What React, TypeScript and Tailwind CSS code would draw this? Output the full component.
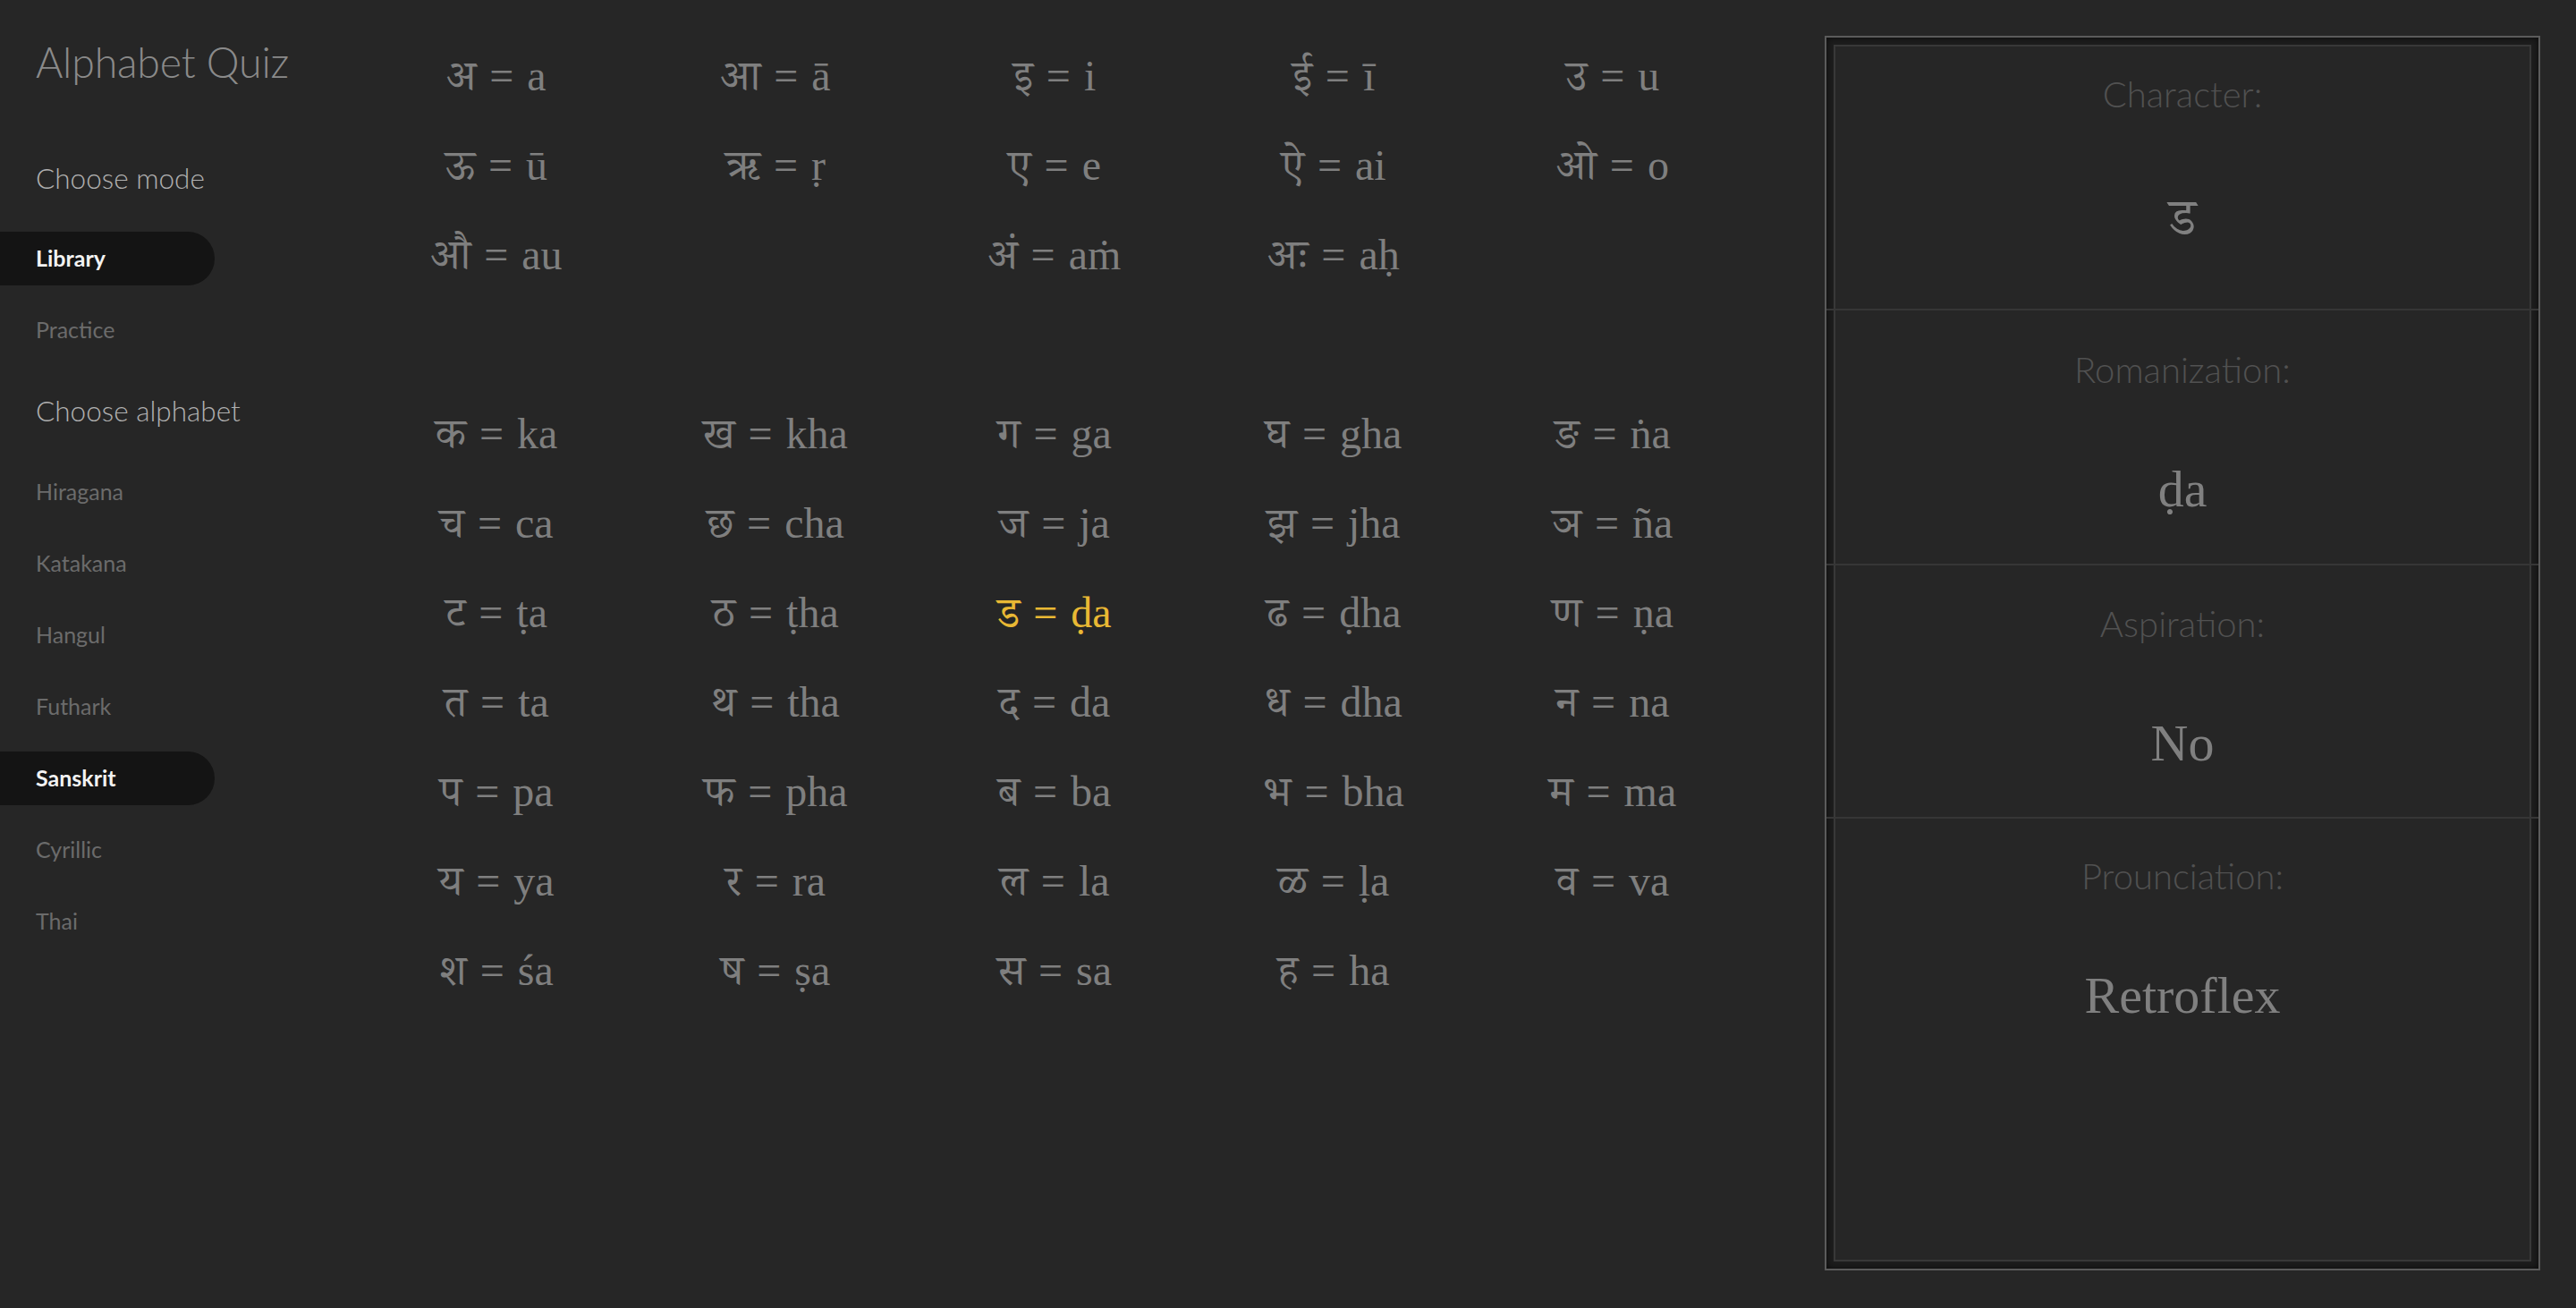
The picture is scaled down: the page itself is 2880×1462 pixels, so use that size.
import React from "react";

type Entry = [string, string] | null;

const vowels: Entry[] = [
  ["अ", "a"], ["आ", "ā"], ["इ", "i"], ["ई", "ī"], ["उ", "u"],
  ["ऊ", "ū"], ["ऋ", "ṛ"], ["ए", "e"], ["ऐ", "ai"], ["ओ", "o"],
  ["औ", "au"], null, ["अं", "aṁ"], ["अः", "aḥ"],
];

const consonants: Entry[] = [
  ["क", "ka"], ["ख", "kha"], ["ग", "ga"], ["घ", "gha"], ["ङ", "ṅa"],
  ["च", "ca"], ["छ", "cha"], ["ज", "ja"], ["झ", "jha"], ["ञ", "ña"],
  ["ट", "ṭa"], ["ठ", "ṭha"], ["ड", "ḍa"], ["ढ", "ḍha"], ["ण", "ṇa"],
  ["त", "ta"], ["थ", "tha"], ["द", "da"], ["ध", "dha"], ["न", "na"],
  ["प", "pa"], ["फ", "pha"], ["ब", "ba"], ["भ", "bha"], ["म", "ma"],
  ["य", "ya"], ["र", "ra"], ["ल", "la"], ["ळ", "ḷa"], ["व", "va"],
  ["श", "śa"], ["ष", "ṣa"], ["स", "sa"], ["ह", "ha"],
];

function Grid({ items }: { items: Entry[] }) {
  return (
    <div className="grid grid-cols-[repeat(5,312px)]">
      {items.map((e, i) =>
        e ? (
          <div
            key={i}
            className={
              "h-[100px] leading-[100px] text-center whitespace-nowrap text-[48px] " +
              (e[1] === "ḍa" ? "text-[#e9b834]" : "text-[#7f7f7f]")
            }
          >
            {e[0]}
            <span className="px-[3px]"> = </span>
            {e[1]}
          </div>
        ) : (
          <div key={i} className="h-[100px]" />
        )
      )}
    </div>
  );
}

function NavItem({ label, active }: { label: string; active?: boolean }) {
  return (
    <div
      className={
        "h-[60px] w-[240px] pl-10 leading-[58px] text-[25px] rounded-r-full " +
        (active ? "bg-[#141414] text-[#f2f2f2] font-bold" : "text-[#6b6b6b] font-normal")
      }
    >
      {label}
    </div>
  );
}

function Section({
  label,
  value,
  kind,
}: {
  label: string;
  value: string;
  kind: "first" | "mid" | "mid2" | "last";
}) {
  const box =
    kind === "first"
      ? "h-[293px] pt-[29px]"
      : kind === "mid"
      ? "h-[283px] pt-[42px]"
      : kind === "mid2"
      ? "h-[281px] pt-[41px]"
      : "flex-1 pt-[40px]";
  return (
    <div className={"flex flex-col items-center " + box}>
      <div className="h-[48px] leading-[48px] text-[40px] font-light text-[#515151] font-['Lato',sans-serif]">
        {label}
      </div>
      <div
        className={
          "leading-[66px] text-[58px] text-[#808080] font-['Liberation_Serif','Noto_Serif_Devanagari','Noto_Sans_Devanagari',serif] " +
          (kind === "first" ? "mt-[81px]" : "mt-[77px]")
        }
      >
        {value}
      </div>
    </div>
  );
}

function Divider() {
  return <div className="h-[2px] -mx-[10px] bg-[#363636]" />;
}

export default function App() {
  return (
    <div className="flex w-full h-[1462px] bg-[#262626] overflow-hidden font-['Lato',sans-serif]">
      {/* Sidebar */}
      <div className="w-[240px] shrink-0 flex flex-col pt-[40px]">
        <div className="pl-10 h-[58px] leading-[58px] text-[46.5px] font-light text-[#8a8a8a] whitespace-nowrap tracking-[-0.2px]">
          Alphabet Quiz
        </div>
        <div className="pl-10 mt-[81px] h-[40px] leading-[40px] text-[31.5px] font-light text-[#b0b0b0] whitespace-nowrap">
          Choose mode
        </div>
        <div className="mt-[40px] flex flex-col gap-[20px]">
          <NavItem label="Library" active />
          <NavItem label="Practice" />
        </div>
        <div className="pl-10 mt-[40px] h-[40px] leading-[40px] text-[31.5px] font-light text-[#b0b0b0] whitespace-nowrap">
          Choose alphabet
        </div>
        <div className="mt-[41px] flex flex-col gap-[20px]">
          <NavItem label="Hiragana" />
          <NavItem label="Katakana" />
          <NavItem label="Hangul" />
          <NavItem label="Futhark" />
          <NavItem label="Sanskrit" active />
          <NavItem label="Cyrillic" />
          <NavItem label="Thai" />
        </div>
      </div>

      {/* Main grid */}
      <div className="flex-1 pl-[159px] pt-[35px] font-['Liberation_Serif','Noto_Serif_Devanagari','Noto_Sans_Devanagari','Lohit_Devanagari',serif]">
        <Grid items={vowels} />
        <div className="h-[100px]" />
        <Grid items={consonants} />
      </div>

      {/* Detail panel */}
      <div className="w-[800px] shrink-0 mt-[40px] mr-[40px] mb-[42px] border-2 border-[#5b5b5b] bg-[#1e1e1e] p-[8px] shadow-[inset_0_0_8px_rgba(0,0,0,0.7)]">
        <div className="h-full flex flex-col border-2 border-[#383838] bg-[#262626]">
          <Section label="Character:" value="ड" kind="first" />
          <Divider />
          <Section label="Romanization:" value="ḍa" kind="mid" />
          <Divider />
          <Section label="Aspiration:" value="No" kind="mid2" />
          <Divider />
          <Section label="Prounciation:" value="Retroflex" kind="last" />
        </div>
      </div>
    </div>
  );
}
